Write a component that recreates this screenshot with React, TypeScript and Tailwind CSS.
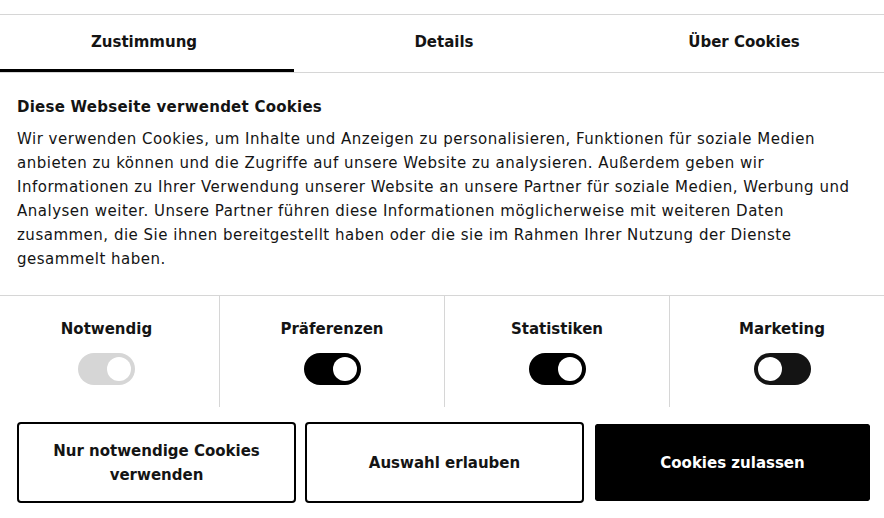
import React from "react";

const tabs = ["Zustimmung", "Details", "Über Cookies"];

const cats: { label: string; on: boolean; disabled?: boolean }[] = [
  { label: "Notwendig", on: true, disabled: true },
  { label: "Präferenzen", on: true },
  { label: "Statistiken", on: true },
  { label: "Marketing", on: false },
];

function Toggle({ on, disabled }: { on: boolean; disabled?: boolean }) {
  const track = disabled ? "bg-[#d6d6d6]" : on ? "bg-black" : "bg-[#141414]";
  return (
    <div
      className={`flex h-[32px] w-[57px] items-center rounded-full p-[4px] ${track} ${
        on ? "justify-end" : "justify-start"
      }`}
    >
      <div className="h-[24px] w-[24px] rounded-full bg-white" />
    </div>
  );
}

export default function App() {
  return (
    <div
      className="h-[518px] w-[884px] overflow-hidden bg-white text-[15px] leading-[24px] text-[#141414]"
      style={{ fontFamily: '"DejaVu Sans", sans-serif' }}
    >
      <div className="h-[14px]" />
      {/* Tabs */}
      <div className="overflow-hidden border-y border-[#d6d6d6]">
        <div className="-ml-[6px] grid w-[900px] grid-cols-3">
          {tabs.map((t, i) => (
            <div key={t} className="relative flex h-[57px] items-center justify-center pb-[4px] font-bold">
              {t}
              {i === 0 && <div className="absolute bottom-0 left-0 right-0 h-[3px] bg-black" />}
            </div>
          ))}
        </div>
      </div>

      {/* Body */}
      <div className="px-[17px] pb-[24px] pt-[22px]">
        <h2 className="font-bold tracking-[0.25px]">Diese Webseite verwendet Cookies</h2>
        <p className="mt-[8px] pr-[12px] tracking-[0.5px]">
          Wir verwenden Cookies, um Inhalte und Anzeigen zu personalisieren, Funktionen für soziale Medien
          anbieten zu können und die Zugriffe auf unsere Website zu analysieren. Außerdem geben wir
          Informationen zu Ihrer Verwendung unserer Website an unsere Partner für soziale Medien, Werbung und
          Analysen weiter. Unsere Partner führen diese Informationen möglicherweise mit weiteren Daten
          zusammen, die Sie ihnen bereitgestellt haben oder die sie im Rahmen Ihrer Nutzung der Dienste
          gesammelt haben.
        </p>
      </div>

      {/* Categories */}
      <div className="overflow-hidden border-t border-[#d6d6d6]">
        <div className="-ml-[6px] grid w-[900px] grid-cols-4">
          {cats.map((c, i) => (
            <div
              key={c.label}
              className={`flex h-[111px] flex-col items-center pt-[21px] ${
                i > 0 ? "border-l border-[#d6d6d6]" : ""
              }`}
            >
              <div className="font-bold">{c.label}</div>
              <div className="mt-[12px]">
                <Toggle on={c.on} disabled={c.disabled} />
              </div>
            </div>
          ))}
        </div>
      </div>

      {/* Buttons */}
      <div className="mt-[15px] grid grid-cols-3 gap-[9px] pl-[17px] pr-[12px]">
        <button className="flex h-[81px] items-center justify-center rounded-[4px] border-2 border-black bg-white px-[28px] text-center font-bold leading-[24px] text-[#141414]">
          Nur notwendige Cookies verwenden
        </button>
        <button className="flex h-[81px] items-center justify-center rounded-[4px] border-2 border-black bg-white px-[16px] text-center font-bold leading-[24px] text-[#141414]">
          Auswahl erlauben
        </button>
        <button className="flex h-[81px] items-center justify-center rounded-[4px] border-2 border-white bg-black bg-clip-padding px-[16px] text-center font-bold leading-[24px] text-white">
          Cookies zulassen
        </button>
      </div>
    </div>
  );
}
